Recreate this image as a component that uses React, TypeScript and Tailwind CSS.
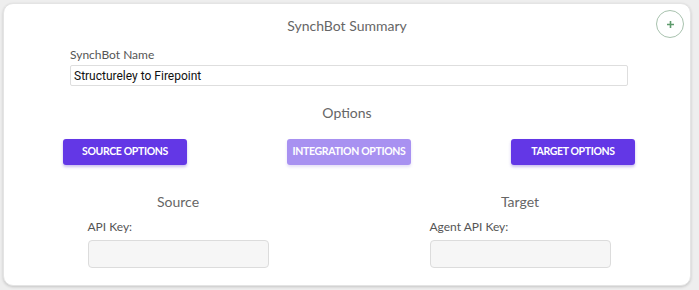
import React from "react";

export default function App() {
  return (
    <div className="w-[699px] h-[290px] bg-[#eeeeee] pt-[3px] pl-[3px]" style={{ fontFamily: "Lato, 'Open Sans', sans-serif" }}>
      <div className="relative w-[688px] h-[283px] rounded-[10px] bg-white shadow-[0_1px_3px_rgba(0,0,0,0.18)] border border-[#e4e4e4]">
        <div className="pt-[13px] text-center text-[14px] leading-[18px] text-[#666]">SynchBot Summary</div>
        <button className="absolute right-[6px] top-[6px] w-[28px] h-[28px] rounded-full border border-[#a8c2ae] flex items-center justify-center">
          <svg width="9" height="9" viewBox="0 0 9 9">
            <path d="M4.5 1v7M1 4.5h7" stroke="#5e9b6c" strokeWidth="1.6" />
          </svg>
        </button>
        <div className="ml-[66px] mt-[12px] w-[558px]">
          <div className="text-[12px] leading-[15px] text-[#555]">SynchBot Name</div>
          <div className="mt-[3px] h-[21px] border border-[#dedede] rounded-[2px] flex items-center pl-[3px] text-[12px] text-[#111]" style={{ fontFamily: "Roboto, Arial, sans-serif" }}>
            Structureley to Firepoint
          </div>
        </div>
        <div className="mt-[18px] text-center text-[14px] leading-[18px] text-[#666]">Options</div>
        <div className="mt-[17px] ml-[9px] w-[672px] grid grid-cols-3">
          <div className="flex justify-center">
            <button className="w-[124px] h-[26px] rounded-[3px] bg-[#6337e6] text-white text-[10.5px] tracking-[-0.35px] whitespace-nowrap font-bold shadow-[0_2px_3px_rgba(80,40,200,0.3)]">SOURCE OPTIONS</button>
          </div>
          <div className="flex justify-center">
            <button className="w-[124px] h-[26px] rounded-[3px] bg-[#a891f1] text-white text-[10.5px] tracking-[-0.35px] whitespace-nowrap font-bold shadow-[0_2px_3px_rgba(80,40,200,0.15)]">INTEGRATION OPTIONS</button>
          </div>
          <div className="flex justify-center">
            <button className="w-[124px] h-[26px] rounded-[3px] bg-[#6337e6] text-white text-[10.5px] tracking-[-0.35px] whitespace-nowrap font-bold shadow-[0_2px_3px_rgba(80,40,200,0.3)]">TARGET OPTIONS</button>
          </div>
        </div>
        <div className="mt-[28px] grid grid-cols-2 ml-[3px] w-[684px]">
          <div className="flex flex-col items-center">
            <div className="text-[14px] leading-[18px] text-[#666]">Source</div>
            <div className="w-[181px] mt-[8px]">
              <div className="text-[12px] leading-[15px] text-[#555]">API Key:</div>
              <div className="mt-[6px] h-[28px] bg-[#f6f6f6] border border-[#dcdcdc] rounded-[4px]" />
            </div>
          </div>
          <div className="flex flex-col items-center">
            <div className="text-[14px] leading-[18px] text-[#666]">Target</div>
            <div className="w-[181px] mt-[8px]">
              <div className="text-[12px] leading-[15px] text-[#555]">Agent API Key:</div>
              <div className="mt-[6px] h-[28px] bg-[#f6f6f6] border border-[#dcdcdc] rounded-[4px]" />
            </div>
          </div>
        </div>
      </div>
    </div>
  );
}
